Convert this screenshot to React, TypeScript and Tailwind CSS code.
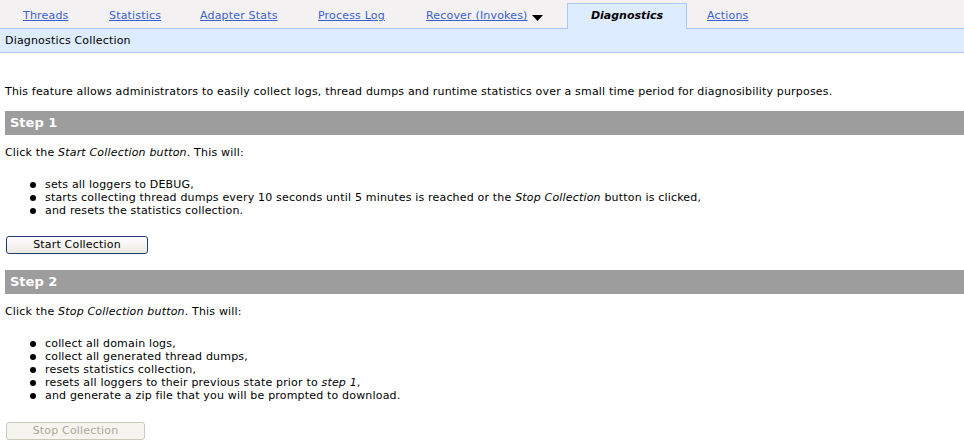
import React from "react";

const tabs = [
  { label: "Threads", w: "w-[86px]" },
  { label: "Statistics", w: "w-[91px]" },
  { label: "Adapter Stats", w: "w-[118px]" },
  { label: "Process Log", w: "w-[108px]" },
];

function Bullets({ items }: { items: React.ReactNode[] }) {
  return (
    <ul className="pl-[25px]">
      {items.map((item, i) => (
        <li key={i} className="flex h-[13px] items-center leading-[13px]">
          <span className="mr-[9px] h-[6px] w-[6px] shrink-0 rounded-full bg-black" />
          <span>{item}</span>
        </li>
      ))}
    </ul>
  );
}

function StepBar({ children }: { children: React.ReactNode }) {
  return (
    <div className="flex h-[24px] items-center bg-[#9d9d9d] pl-[5px] text-[13px] font-bold tracking-normal text-white">
      {children}
    </div>
  );
}

export default function App() {
  return (
    <div
      className="h-[446px] w-[964px] overflow-hidden bg-white text-[11px] tracking-[0.18px] text-black"
      style={{ fontFamily: '"DejaVu Sans", Verdana, sans-serif' }}
    >
      {/* tab strip */}
      <div className="flex h-[28px] items-end bg-[#f3f1f1] pl-[3px]">
        {tabs.map((t) => (
          <div key={t.label} className={`flex h-[25px] items-center pl-[20px] pt-[2px] ${t.w}`}>
            <a className="text-[#3c5fd0] underline">{t.label}</a>
          </div>
        ))}
        <div className="flex h-[25px] w-[161px] items-center pl-[20px] pt-[2px]">
          <a className="text-[#3c5fd0] underline">Recover (Invokes)</a>
          <svg width="11" height="6" viewBox="0 0 11 6" className="ml-[4px] mt-[2px]">
            <path d="M0 0 L11 0 L5.5 6 Z" fill="#000" />
          </svg>
        </div>
        <div className="relative top-px flex h-[26px] w-[120px] items-center justify-center border border-b-0 border-[#a9c8f7] bg-[#ddecfe] font-bold italic tracking-normal">
          Diagnostics
        </div>
        <div className="flex h-[25px] items-center pl-[20px] pt-[2px]">
          <a className="text-[#3c5fd0] underline">Actions</a>
        </div>
      </div>

      {/* sub header */}
      <div className="flex h-[25px] items-center border-y border-[#a9c8f7] bg-[#ddecfe] pl-[5px] pt-px">
        Diagnostics Collection
      </div>

      <div className="pl-[5px]">
        <p className="mt-[32px] leading-[13px]">
          This feature allows administrators to easily collect logs, thread dumps and runtime statistics over a small time period for diagnosibility purposes.
        </p>

        <div className="mt-[13px]">
          <StepBar>Step 1</StepBar>
        </div>
        <p className="mt-[11px] leading-[13px]">
          Click the <i>Start Collection button</i>. This will:
        </p>
        <div className="mt-[19px]">
          <Bullets
            items={[
              "sets all loggers to DEBUG,",
              <>
                starts collecting thread dumps every 10 seconds until 5 minutes is reached or the <i>Stop Collection</i> button is clicked,
              </>,
              "and resets the statistics collection.",
            ]}
          />
        </div>
        <button className="ml-px mt-[19px] flex h-[18px] w-[142px] items-center justify-center rounded-[3px] border border-[#1f3a6b] bg-gradient-to-b from-white to-[#ece9e2] text-[11px]">
          Start Collection
        </button>

        <div className="mt-[16px]">
          <StepBar>Step 2</StepBar>
        </div>
        <p className="mt-[11px] leading-[13px]">
          Click the <i>Stop Collection button</i>. This will:
        </p>
        <div className="mt-[19px]">
          <Bullets
            items={[
              "collect all domain logs,",
              "collect all generated thread dumps,",
              "resets statistics collection,",
              <>
                resets all loggers to their previous state prior to <i>step 1</i>,
              </>,
              "and generate a zip file that you will be prompted to download.",
            ]}
          />
        </div>
        <button
          disabled
          className="ml-px mt-[20px] flex h-[18px] w-[139px] items-center justify-center rounded-[3px] border border-[#cac8bb] bg-[#f5f4ef] text-[11px] text-[#aca899]"
        >
          Stop Collection
        </button>
      </div>
    </div>
  );
}
